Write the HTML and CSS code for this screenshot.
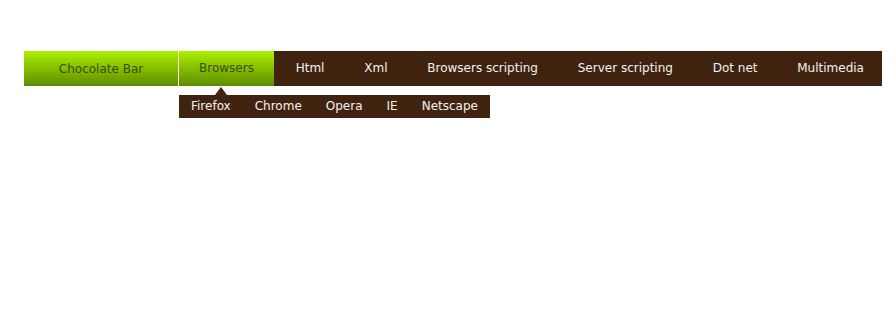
FILE: index.html
```html
<!DOCTYPE html>
<html lang="en">
<head>
    <meta charset="UTF-8">
    <title>Chocolate Bar menu</title>
    <link rel="stylesheet" href="styles.css">
</head>
<body>

    <div class="menu">
        <div class="brand">Chocolate Bar</div>
        <ul class="items">
            <li class="active"><a href="#">Browsers</a></li>
            <li><a href="#">Html</a></li>
            <li><a href="#">Xml</a></li>
            <li><a href="#">Browsers scripting</a></li>
            <li><a href="#">Server scripting</a></li>
            <li><a href="#">Dot net</a></li>
            <li><a href="#">Multimedia</a></li>
        </ul>
    </div>

    <ul class="submenu">
        <li><a href="#">Firefox</a></li>
        <li><a href="#">Chrome</a></li>
        <li><a href="#">Opera</a></li>
        <li><a href="#">IE</a></li>
        <li><a href="#">Netscape</a></li>
    </ul>

</body>
</html>
```

FILE: styles.css
```css
body {
    font-family: Tahoma, "DejaVu Sans", Verdana, sans-serif;
    font-size: 12px;
    background: #fff;
    margin: 0;
    padding: 51px 13px 0 24px;
}
.menu {
    display: flex;
    width: 858px;
    height: 35px;
    background: #40230f;
    white-space: nowrap;
}
.brand {
    flex: 0 0 154px;
    border-right: 1px solid #f4f8dc;
    display: flex;
    align-items: center;
    justify-content: center;
    color: #3c4c00;
    background: linear-gradient(#acf000, #5d8c00);
}
.items {
    flex: 1;
    display: flex;
    justify-content: space-between;
    list-style: none;
    margin: 0;
    padding: 0;
}
.items a {
    display: block;
    height: 35px;
    line-height: 35px;
    padding: 0 18px;
    color: #f2f2f2;
    text-decoration: none;
}
.items .active a {
    padding: 0 20px;
    color: #3c4c00;
    background: linear-gradient(#acf000, #5d8c00);
}
.submenu {
    position: relative;
    display: flex;
    width: max-content;
    height: 23px;
    list-style: none;
    margin: 9px 0 0 155px;
    padding: 0;
    background: #40230f;
    white-space: nowrap;
}
.submenu::before {
    content: "";
    position: absolute;
    top: -8px;
    left: 36px;
    border-left: 6px solid transparent;
    border-right: 6px solid transparent;
    border-bottom: 8px solid #40230f;
}
.submenu a {
    display: block;
    line-height: 23px;
    padding: 0 12px;
    color: #f2f2f2;
    text-decoration: none;
}
```
